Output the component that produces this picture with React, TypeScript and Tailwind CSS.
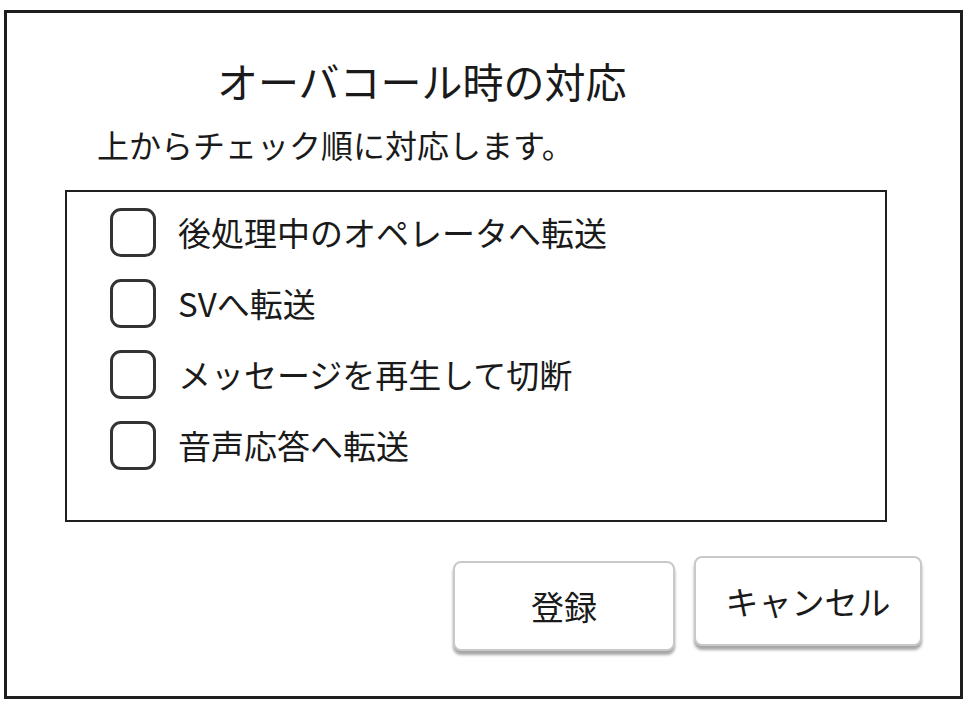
import React from "react";

const options = [
  "後処理中のオペレータへ転送",
  "SVへ転送",
  "メッセージを再生して切断",
  "音声応答へ転送",
];

export default function App() {
  return (
    <div
      className="w-[970px] h-[709px] bg-white pt-[10px] pl-[4px] text-[#1a1a1a]"
      style={{ fontFamily: '"Noto Sans CJK JP", "Noto Sans", sans-serif' }}
    >
      <div className="w-[959px] h-[689px] border-[3px] border-[#1e1e1e] flex flex-col">
        <h1 className="ml-[210px] mt-[47px] text-[41px] leading-[41px] font-normal">
          オーバコール時の対応
        </h1>
        <p className="ml-[90px] mt-[27px] text-[32px] leading-[32px]">
          上からチェック順に対応します。
        </p>

        <div className="ml-[58px] mt-[30px] w-[822px] h-[332px] border-2 border-[#1e1e1e] pt-[16px] pl-[43px] flex flex-col gap-[22px]">
          {options.map((label) => (
            <label key={label} className="flex items-center gap-[22px] h-[49px]">
              <span className="w-[46px] h-[49px] shrink-0 rounded-[11px] border-[3px] border-[#333]" />
              <span className="text-[33px] leading-[33px]">{label}</span>
            </label>
          ))}
        </div>

        <div className="mt-[34px] pr-[38px] flex justify-end items-start gap-[19px]">
          <button className="mt-[5px] w-[222px] h-[90px] rounded-[8px] border-2 border-[#c9c9c9] bg-white shadow-[0_4px_3px_rgba(0,0,0,0.35)] text-[33px] leading-[33px]">
            登録
          </button>
          <button className="w-[228px] h-[90px] rounded-[8px] border-2 border-[#c9c9c9] bg-white shadow-[0_4px_3px_rgba(0,0,0,0.35)] text-[33px] leading-[33px]">
            キャンセル
          </button>
        </div>
      </div>
    </div>
  );
}
